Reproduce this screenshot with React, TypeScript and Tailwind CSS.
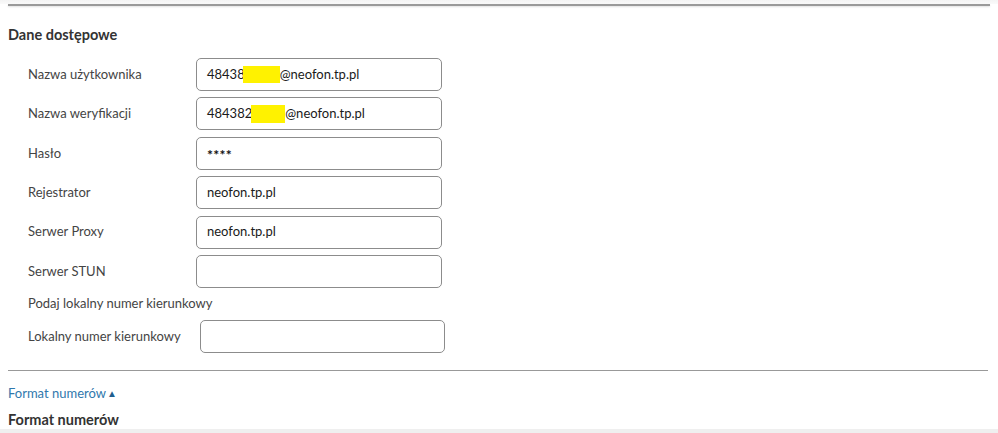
import React from "react";

const font = { fontFamily: "Lato, 'Noto Sans', sans-serif" };

function Field({ label, children }: { label: string; children?: React.ReactNode }) {
  return (
    <div className="flex items-center h-[33px]">
      <div className="w-[168px] text-[13px] text-[#444]">{label}</div>
      <div className="w-[246px] h-[33px] border border-[#8c8c8c] rounded-[5px] bg-white flex items-center pl-[10px] text-[13px] text-[#1a1a1a]">
        {children}
      </div>
    </div>
  );
}

export default function App() {
  return (
    <div className="w-[998px] h-[433px] bg-white overflow-hidden flex flex-col" style={font}>
      <div className="h-[4px] bg-gradient-to-b from-[#f4f4f4] to-[#fafafa]" />
      <div className="mx-[8px] border-t-2 border-[#9a9a9a] shadow-[0_1px_2px_rgba(0,0,0,0.12)]" />
      <div className="px-[8px] flex-1 flex flex-col">
        <div className="mt-[20px] text-[14.5px] font-bold text-[#333] leading-[18px]">Dane dostępowe</div>
        <div className="pl-[20px] mt-[14px] flex flex-col gap-[6.4px]">
          <Field label="Nazwa użytkownika">
            <span>48438</span>
            <span className="inline-block w-[37px] h-[17px] bg-[#fff200] -ml-[2px]" />
            <span>@neofon.tp.pl</span>
          </Field>
          <Field label="Nazwa weryfikacji">
            <span>484382</span>
            <span className="inline-block w-[34px] h-[18px] bg-[#fff200] -ml-[1px]" />
            <span>@neofon.tp.pl</span>
          </Field>
          <Field label="Hasło">
            <span className="text-[14px] tracking-[0.3px] font-bold text-[#111] pt-[3px]">****</span>
          </Field>
          <Field label="Rejestrator">neofon.tp.pl</Field>
          <Field label="Serwer Proxy">neofon.tp.pl</Field>
          <Field label="Serwer STUN" />
        </div>
        <div className="pl-[20px] mt-[7px] text-[13px] text-[#444] leading-[16px]">Podaj lokalny numer kierunkowy</div>
        <div className="pl-[20px] mt-[9px] flex items-center h-[33px]">
          <div className="w-[172px] text-[13px] text-[#444]">Lokalny numer kierunkowy</div>
          <div className="w-[245px] h-[33px] border border-[#8c8c8c] rounded-[5px] bg-white" />
        </div>
        <div className="mt-[17px] mr-[2px] border-t border-[#999]" />
        <div className="mt-[14px] text-[13px] text-[#2f78ad] leading-[16px] flex items-center">
          Format numerów<span className="ml-[1px] text-[10px] text-[#1f5f8f]">▲</span>
        </div>
        <div className="mt-[10px] text-[14.5px] font-bold text-[#333] leading-[18px] h-[12px] overflow-visible">Format numerów</div>
      </div>
      <div className="h-[4px] bg-[#efefef] relative z-10" />
    </div>
  );
}
